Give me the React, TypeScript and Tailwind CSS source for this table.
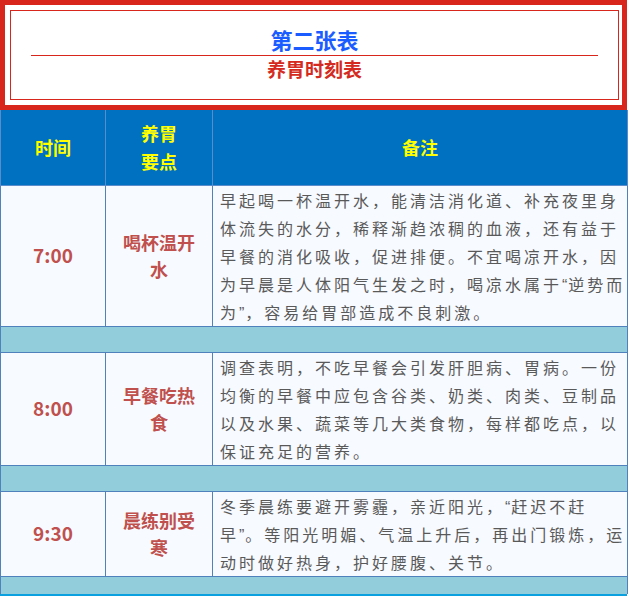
import React from "react";

const rows = [
  {
    time: "7:00",
    point: ["喝杯温开", "水"],
    lines: [
      "早起喝一杯温开水，能清洁消化道、补充夜里身",
      "体流失的水分，稀释渐趋浓稠的血液，还有益于",
      "早餐的消化吸收，促进排便。不宜喝凉开水，因",
      "为早晨是人体阳气生发之时，喝凉水属于“逆势而",
      "为”，容易给胃部造成不良刺激。",
    ],
  },
  {
    time: "8:00",
    point: ["早餐吃热", "食"],
    lines: [
      "调查表明，不吃早餐会引发肝胆病、胃病。一份",
      "均衡的早餐中应包含谷类、奶类、肉类、豆制品",
      "以及水果、蔬菜等几大类食物，每样都吃点，以",
      "保证充足的营养。",
    ],
  },
  {
    time: "9:30",
    point: ["晨练别受", "寒"],
    lines: [
      "冬季晨练要避开雾霾，亲近阳光，“赶迟不赶",
      "早”。等阳光明媚、气温上升后，再出门锻炼，运",
      "动时做好热身，护好腰腹、关节。",
    ],
  },
];

function Line({ text }: { text: string }) {
  const parts = text.split(/([“”])/);
  return (
    <div className="h-[28px] whitespace-nowrap overflow-visible">
      {parts.map((p, i) =>
        p === "“" || p === "”" ? (
          <span key={i} className="font-['Liberation_Sans'] leading-[0] tracking-[1px]">
            {p}
          </span>
        ) : (
          <React.Fragment key={i}>{p}</React.Fragment>
        )
      )}
    </div>
  );
}

export default function App() {
  return (
    <div
      lang="zh-CN"
      className="w-[629px] h-[596px] bg-white overflow-hidden"
      style={{ fontFamily: '"Noto Sans CJK SC", "Noto Sans", sans-serif' }}
    >
      <div className="w-[627px] h-[110px] border-[5px] border-[#d9261c] pt-[5px] pb-[5px] pl-[5px] pr-[3px]">
        <div className="h-full border border-[#d9261c] flex flex-col items-center pt-[14px]">
          <div className="text-[22px] leading-[28px] font-bold text-[#1a5cff]">第二张表</div>
          <div className="self-stretch mx-[20px] h-px bg-[#d9261c] mt-[2px]" />
          <div className="text-[19px] leading-[26px] font-bold text-[#d42a20]">养胃时刻表</div>
        </div>
      </div>
      <table className="w-[627px] table-fixed border-collapse">
        <colgroup>
          <col className="w-[105px]" />
          <col className="w-[107px]" />
          <col className="w-[415px]" />
        </colgroup>
        <tbody>
          <tr className="bg-[#0070c0]">
            <td className="h-[75px] border-x border-b border-[#5a8ccc] text-center align-middle text-[18px] leading-[28px] font-bold text-[#ffff00]">
              时间
            </td>
            <td className="h-[75px] border-x border-b border-[#5a8ccc] text-center align-middle text-[18px] leading-[28px] font-bold text-[#ffff00]">
              养胃
              <br />
              要点
            </td>
            <td className="h-[75px] border-x border-b border-[#5a8ccc] text-center align-middle text-[18px] leading-[28px] font-bold text-[#ffff00]">
              备注
            </td>
          </tr>
          {rows.map((r, idx) => (
            <React.Fragment key={r.time}>
              <tr className="bg-[#f7faff]">
                <td className="border border-[#4f81bd] text-center align-middle text-[19px] font-bold text-[#c0504d]">
                  {r.time}
                </td>
                <td className="border border-[#4f81bd] text-center align-middle text-[18px] leading-[27px] font-bold text-[#c0504d]">
                  {r.point[0]}
                  <br />
                  {r.point[1]}
                </td>
                <td className="border border-[#4f81bd] pl-[7px] pr-[3px] py-0 align-top text-[16px] leading-[28px] tracking-[3px] text-[#595959]">
                  {r.lines.map((l, i) => (
                    <Line key={i} text={l} />
                  ))}
                </td>
              </tr>
              <tr className="bg-[#92cddc]">
                <td
                  colSpan={3}
                  className={
                    idx === rows.length - 1
                      ? "h-[18px] border-x border-t border-[#4f81bd] p-0"
                      : "h-[26px] border border-[#4f81bd] p-0"
                  }
                />
              </tr>
            </React.Fragment>
          ))}
        </tbody>
      </table>
      <div className="w-[627px] h-[6px] bg-[#0aa0e0]" />
    </div>
  );
}
